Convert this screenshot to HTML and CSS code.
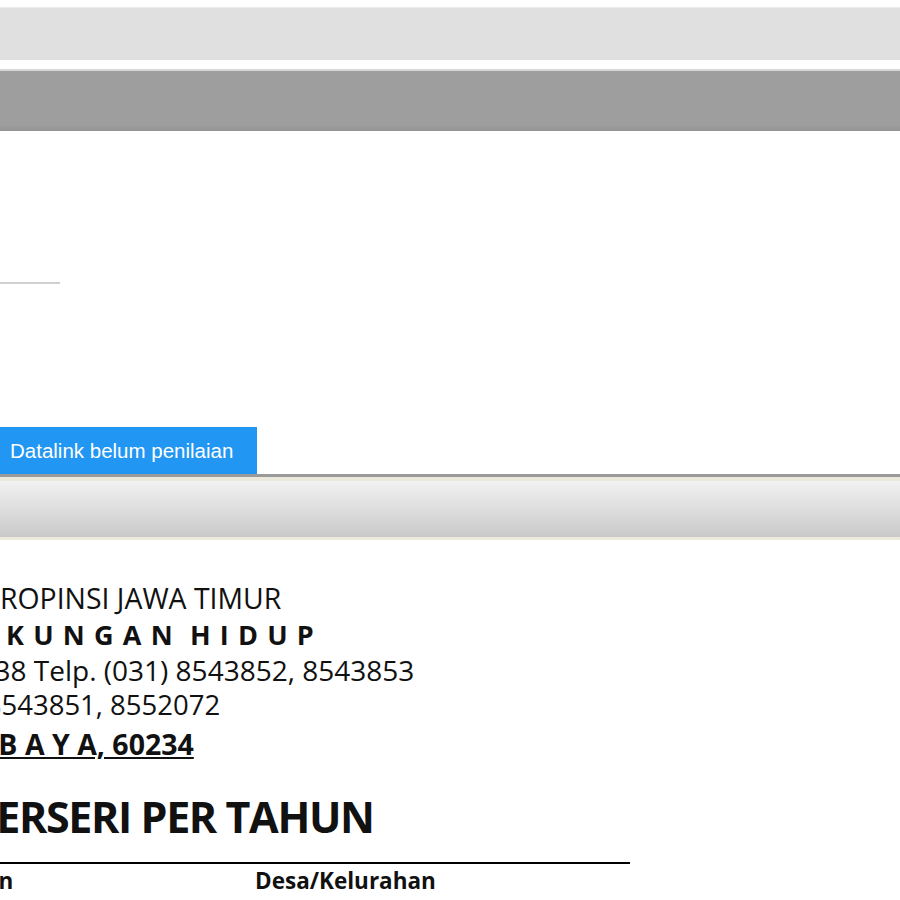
FILE: index.html
```html
<!DOCTYPE html>
<html lang="id">
<head>
<meta charset="utf-8">
<title>Datalink</title>
<link rel="stylesheet" href="styles.css">
</head>
<body>
<div class="page">
  <div class="topbar"></div>
  <div class="navbar"></div>
  <div class="filter">
    <div class="rule"></div>
  </div>
  <div class="tabs">
    <div class="tab active">Datalink belum penilaian</div>
  </div>
  <div class="tabline"></div>
  <div class="panelbar"></div>
  <div class="letterhead">
    <div class="lh lh1">PEMERINTAH PROPINSI JAWA TIMUR</div>
    <div class="lh lh2">D I N A S &nbsp;L I N G K U N G A N &nbsp;H I D U P</div>
    <div class="lh lh3">Jl. Wisata Menanggal No. 38 Telp. (031) 8543852, 8543853</div>
    <div class="lh lh4">Fax. (031) 8543851, 8552072</div>
    <div class="lh lh5"><u>S U R A B A Y A, 60234</u></div>
  </div>
  <h1 class="title">DAFTAR DESA BERSERI PER TAHUN</h1>
  <div class="thead">
    <div class="th th1">Kecamatan</div>
    <div class="th th2">Desa/Kelurahan</div>
  </div>
</div>
</body>
</html>
```
FILE: styles.css
```css
html, body {
  margin: 0;
  padding: 0;
  background: #fff;
  overflow: hidden;
}
.page {
  width: 900px;
  height: 900px;
  overflow: hidden;
  font-family: "Open Sans", "Noto Sans", sans-serif;
  color: #111;
}
.topbar {
  margin-top: 7px;
  height: 52px;
  background: #e0e0e0;
  border-top: 1px solid #ececec;
}
.navbar {
  margin-top: 9px;
  height: 60px;
  background: linear-gradient(#9e9e9e 0, #9e9e9e 90%, #939393 100%);
  border-top: 2px solid #d6d6d6;
}
.filter {
  height: 296px;
  display: flex;
  flex-direction: column;
}
.rule {
  margin-top: 151px;
  width: 60px;
  height: 2px;
  background: #d0d0d0;
}
.tabs {
  display: flex;
  height: 47px;
}
.tab {
  width: 247px;
  padding-left: 10px;
  display: flex;
  align-items: center;
  font-family: "Liberation Sans", Arial, sans-serif;
  font-size: 20.5px;
  color: #fff;
}
.tab.active {
  background: #2196f3;
}
.tabline {
  height: 3px;
  background: #9a9a9a;
}
.panelbar {
  height: 56px;
  border-top: 4px solid #ebe8dc;
  border-bottom: 3px solid #ece9df;
  background: linear-gradient(#f2f2f2, #c9c9c9);
}
.letterhead {
  margin-top: 41px;
}
.lh {
  white-space: nowrap;
  font-size: 28.4px;
  line-height: 35px;
}
.lh1 { text-indent: -200px; }
.lh2 {
  text-indent: -235px;
  font-weight: 700;
  font-size: 27px;
  letter-spacing: 1.1px;
  line-height: 37px;
}
.lh3 { text-indent: -333px; font-size: 28px; line-height: 35px; }
.lh4 { text-indent: -143px; font-size: 27.5px; line-height: 33px; }
.lh5 {
  text-indent: -107px;
  font-weight: 700;
  font-size: 28.5px;
  line-height: 47px;
}
.title {
  margin: 19px 0 0 0;
  text-indent: -314px;
  font-size: 43px;
  font-weight: 700;
  letter-spacing: -1.4px;
  line-height: 60px;
  white-space: nowrap;
}
.thead {
  margin-top: 15px;
  width: 630px;
  border-top: 2px solid #000;
  display: flex;
  font-size: 22.5px;
  font-weight: 700;
  line-height: 34px;
  white-space: nowrap;
}
.th1 {
  flex: 0 0 255px;
  text-indent: -114px;
}
```
